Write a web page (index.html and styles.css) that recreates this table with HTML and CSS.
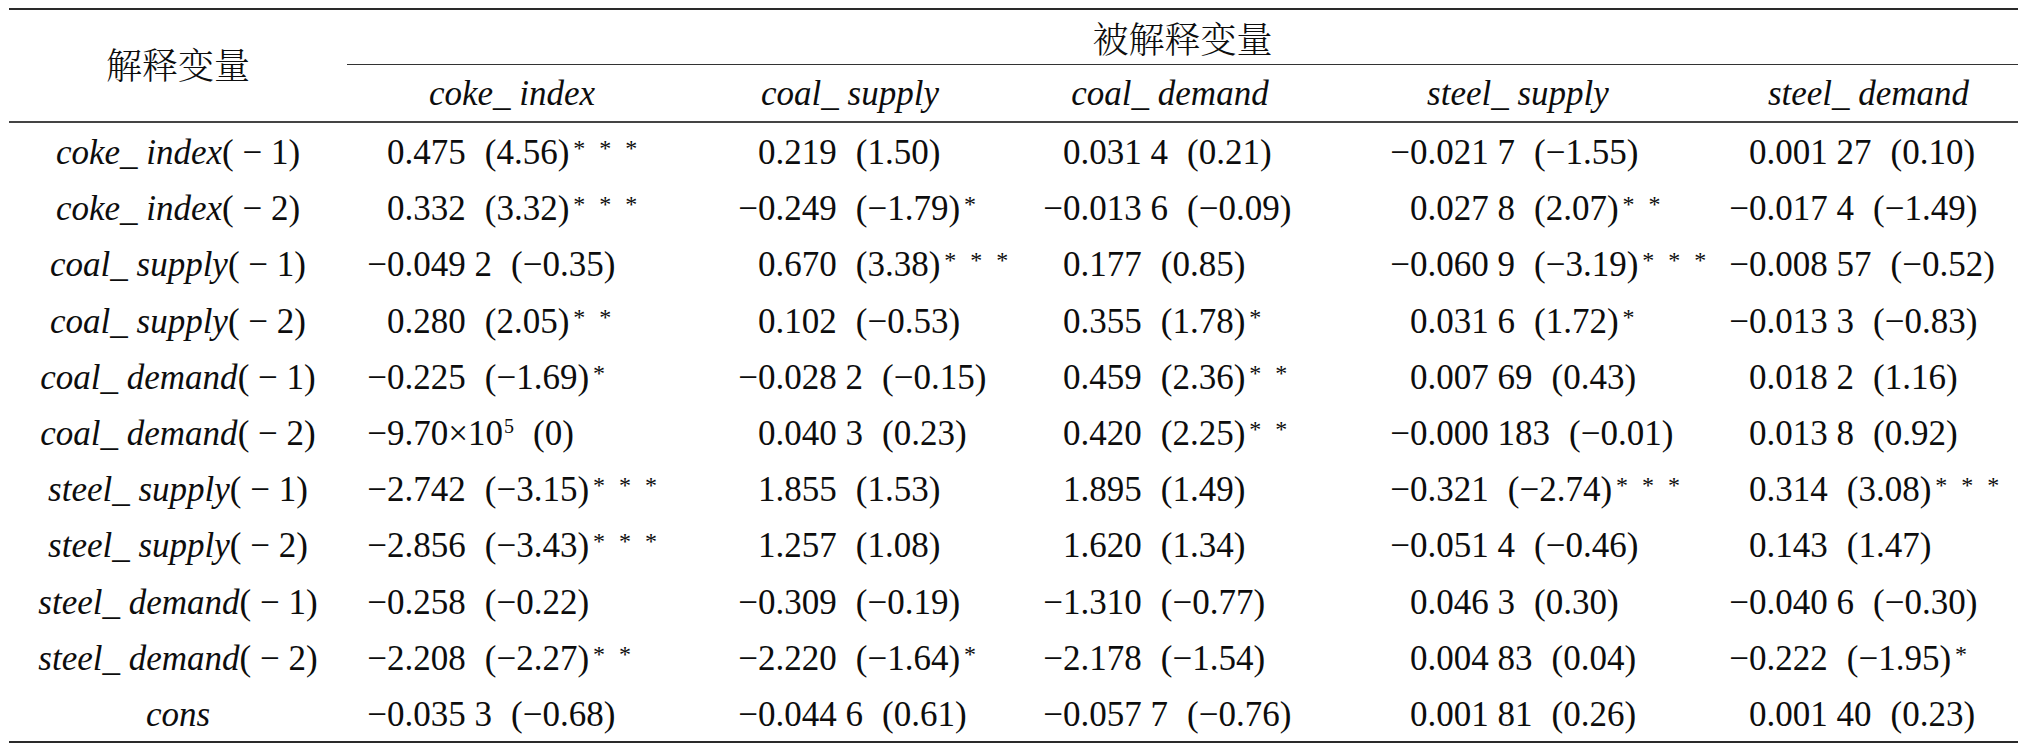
FILE: index.html
```html
<!DOCTYPE html>
<html lang="zh">
<head>
<meta charset="utf-8">
<title>回归结果</title>
<link rel="stylesheet" href="styles.css">
</head>
<body>
<div class="page">
<table class="reg">
<colgroup>
<col class="c0"><col class="c1"><col class="c2"><col class="c3"><col class="c4"><col class="c5">
</colgroup>
<thead>
<tr class="h1">
<th rowspan="2" class="lab-head">解释变量</th>
<th colspan="5" class="dep">被解释变量</th>
</tr>
<tr class="h2">
<th>coke_ index</th>
<th>coal_ supply</th>
<th>coal_ demand</th>
<th>steel_ supply</th>
<th>steel_ demand</th>
</tr>
</thead>
<tbody>
<tr>
<td class="lab"><i>coke_ index</i>( − 1)</td>
<td><span class="v">0.475</span><span class="t">(4.56)</span><sup class="s">* * *</sup></td>
<td><span class="v">0.219</span><span class="t">(1.50)</span></td>
<td><span class="v">0.031 4</span><span class="t">(0.21)</span></td>
<td><span class="v neg">−0.021 7</span><span class="t">(−1.55)</span></td>
<td><span class="v">0.001 27</span><span class="t">(0.10)</span></td>
</tr>
<tr>
<td class="lab"><i>coke_ index</i>( − 2)</td>
<td><span class="v">0.332</span><span class="t">(3.32)</span><sup class="s">* * *</sup></td>
<td><span class="v neg">−0.249</span><span class="t">(−1.79)</span><sup class="s">*</sup></td>
<td><span class="v neg">−0.013 6</span><span class="t">(−0.09)</span></td>
<td><span class="v">0.027 8</span><span class="t">(2.07)</span><sup class="s">* *</sup></td>
<td><span class="v neg">−0.017 4</span><span class="t">(−1.49)</span></td>
</tr>
<tr>
<td class="lab"><i>coal_ supply</i>( − 1)</td>
<td><span class="v neg">−0.049 2</span><span class="t">(−0.35)</span></td>
<td><span class="v">0.670</span><span class="t">(3.38)</span><sup class="s">* * *</sup></td>
<td><span class="v">0.177</span><span class="t">(0.85)</span></td>
<td><span class="v neg">−0.060 9</span><span class="t">(−3.19)</span><sup class="s">* * *</sup></td>
<td><span class="v neg">−0.008 57</span><span class="t">(−0.52)</span></td>
</tr>
<tr>
<td class="lab"><i>coal_ supply</i>( − 2)</td>
<td><span class="v">0.280</span><span class="t">(2.05)</span><sup class="s">* *</sup></td>
<td><span class="v">0.102</span><span class="t">(−0.53)</span></td>
<td><span class="v">0.355</span><span class="t">(1.78)</span><sup class="s">*</sup></td>
<td><span class="v">0.031 6</span><span class="t">(1.72)</span><sup class="s">*</sup></td>
<td><span class="v neg">−0.013 3</span><span class="t">(−0.83)</span></td>
</tr>
<tr>
<td class="lab"><i>coal_ demand</i>( − 1)</td>
<td><span class="v neg">−0.225</span><span class="t">(−1.69)</span><sup class="s">*</sup></td>
<td><span class="v neg">−0.028 2</span><span class="t">(−0.15)</span></td>
<td><span class="v">0.459</span><span class="t">(2.36)</span><sup class="s">* *</sup></td>
<td><span class="v">0.007 69</span><span class="t">(0.43)</span></td>
<td><span class="v">0.018 2</span><span class="t">(1.16)</span></td>
</tr>
<tr>
<td class="lab"><i>coal_ demand</i>( − 2)</td>
<td><span class="v neg">−9.70×10<sup class="e">5</sup></span><span class="t">(0)</span></td>
<td><span class="v">0.040 3</span><span class="t">(0.23)</span></td>
<td><span class="v">0.420</span><span class="t">(2.25)</span><sup class="s">* *</sup></td>
<td><span class="v neg">−0.000 183</span><span class="t">(−0.01)</span></td>
<td><span class="v">0.013 8</span><span class="t">(0.92)</span></td>
</tr>
<tr>
<td class="lab"><i>steel_ supply</i>( − 1)</td>
<td><span class="v neg">−2.742</span><span class="t">(−3.15)</span><sup class="s">* * *</sup></td>
<td><span class="v">1.855</span><span class="t">(1.53)</span></td>
<td><span class="v">1.895</span><span class="t">(1.49)</span></td>
<td><span class="v neg">−0.321</span><span class="t">(−2.74)</span><sup class="s">* * *</sup></td>
<td><span class="v">0.314</span><span class="t">(3.08)</span><sup class="s">* * *</sup></td>
</tr>
<tr>
<td class="lab"><i>steel_ supply</i>( − 2)</td>
<td><span class="v neg">−2.856</span><span class="t">(−3.43)</span><sup class="s">* * *</sup></td>
<td><span class="v">1.257</span><span class="t">(1.08)</span></td>
<td><span class="v">1.620</span><span class="t">(1.34)</span></td>
<td><span class="v neg">−0.051 4</span><span class="t">(−0.46)</span></td>
<td><span class="v">0.143</span><span class="t">(1.47)</span></td>
</tr>
<tr>
<td class="lab"><i>steel_ demand</i>( − 1)</td>
<td><span class="v neg">−0.258</span><span class="t">(−0.22)</span></td>
<td><span class="v neg">−0.309</span><span class="t">(−0.19)</span></td>
<td><span class="v neg">−1.310</span><span class="t">(−0.77)</span></td>
<td><span class="v">0.046 3</span><span class="t">(0.30)</span></td>
<td><span class="v neg">−0.040 6</span><span class="t">(−0.30)</span></td>
</tr>
<tr>
<td class="lab"><i>steel_ demand</i>( − 2)</td>
<td><span class="v neg">−2.208</span><span class="t">(−2.27)</span><sup class="s">* *</sup></td>
<td><span class="v neg">−2.220</span><span class="t">(−1.64)</span><sup class="s">*</sup></td>
<td><span class="v neg">−2.178</span><span class="t">(−1.54)</span></td>
<td><span class="v">0.004 83</span><span class="t">(0.04)</span></td>
<td><span class="v neg">−0.222</span><span class="t">(−1.95)</span><sup class="s">*</sup></td>
</tr>
<tr class="last">
<td class="lab"><i>cons</i></td>
<td><span class="v neg">−0.035 3</span><span class="t">(−0.68)</span></td>
<td><span class="v neg">−0.044 6</span><span class="t">(0.61)</span></td>
<td><span class="v neg">−0.057 7</span><span class="t">(−0.76)</span></td>
<td><span class="v">0.001 81</span><span class="t">(0.26)</span></td>
<td><span class="v">0.001 40</span><span class="t">(0.23)</span></td>
</tr>
</tbody>
</table>
</div>
</body>
</html>
```

FILE: styles.css
```css
* {
  box-sizing: border-box;
}

body {
  margin: 0;
  background: #ffffff;
  color: #0d0d0d;
  font-family: "Liberation Serif", "Noto Serif CJK SC", "Noto Sans CJK SC", serif;
}

.page {
  padding: 8px 0 0 9px;
}

.reg {
  border-collapse: separate;
  border-spacing: 0;
  table-layout: fixed;
  width: 2009px;
  font-size: 35px;
  line-height: 40px;
}

.c0 { width: 338px; }
.c1 { width: 330px; }
.c2 { width: 346px; }
.c3 { width: 294px; }
.c4 { width: 402px; }
.c5 { width: 299px; }

.reg th {
  font-weight: 400;
  padding: 0;
  text-align: center;
  vertical-align: middle;
  white-space: nowrap;
}

.h1 th {
  border-top: 2px solid #2a2a2a;
  height: 57px;
}

.h1 .dep {
  border-bottom: 1px solid #333333;
  font-family: "Noto Serif CJK SC", "Noto Sans CJK SC", serif;
  font-weight: 300;
  font-size: 36px;
  padding-top: 2px;
}

.h1 .lab-head {
  border-bottom: 2px solid #444444;
  font-family: "Noto Serif CJK SC", "Noto Sans CJK SC", serif;
  font-weight: 300;
  font-size: 36px;
  padding-bottom: 4px;
}

.h2 th {
  border-bottom: 2px solid #444444;
  height: 58px;
  font-style: italic;
  padding-top: 2px;
}

.reg td {
  height: 56.2px;
  padding: 4px 0 0 0;
  vertical-align: middle;
  white-space: nowrap;
  text-align: left;
}

.reg tr.last td {
  height: 58.2px;
  border-bottom: 2px solid #2a2a2a;
}

.reg td.lab {
  text-align: center;
}

.reg td:nth-child(2) { padding-left: 40px; }
.reg td:nth-child(3) { padding-left: 81px; }
.reg td:nth-child(4) { padding-left: 40px; }
.reg td:nth-child(5) { padding-left: 93px; }
.reg td:nth-child(6) { padding-left: 30px; }

.v.neg {
  margin-left: -0.564em;
}

.t {
  margin-left: 19px;
}

.s {
  font-size: 24px;
  letter-spacing: 4px;
  vertical-align: 8px;
  line-height: 0;
  margin-left: 4px;
}

.e {
  font-size: 20px;
  vertical-align: 12px;
  line-height: 0;
  margin-left: 1px;
}
```
